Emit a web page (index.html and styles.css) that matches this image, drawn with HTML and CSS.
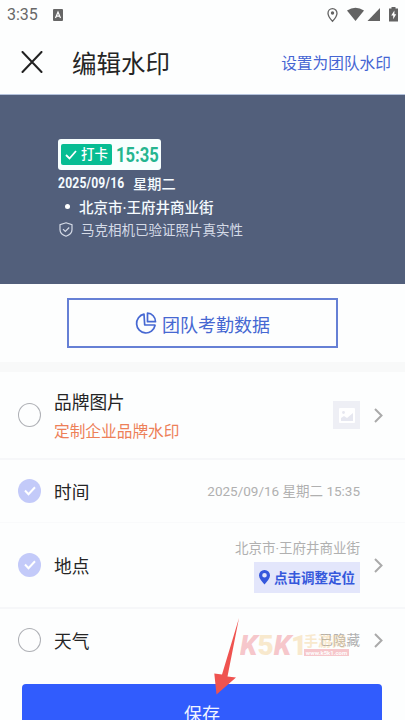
FILE: index.html
```html
<!DOCTYPE html>
<html lang="zh-CN">
<head>
<meta charset="utf-8">
<title>编辑水印</title>
<link rel="stylesheet" href="styles.css">
</head>
<body>
<div class="screen">
  <div class="status">
    <span class="clock">3:35</span>
    <svg class="ime" width="10" height="12" viewBox="0 0 10 12"><rect width="10" height="12" rx="1" fill="#666"/><path d="M2.5 9 5 3l2.5 6M3.4 7.2h3.2" fill="none" stroke="#fff" stroke-width="1.2"/></svg>
    <svg class="sys" width="72" height="16" viewBox="0 0 72 16" fill="#636363">
      <path d="M5.500 1.600c-2.600 0-4.500 2-4.500 4.600 0 3.300 4.500 8 4.500 8s4.500-4.700 4.500-8c0-2.600-1.900-4.600-4.500-4.600z" fill="none" stroke="#636363" stroke-width="1.300"/><circle cx="5.500" cy="6" r="1.700"/>
      <path d="M20 3.500Q28.500-1.900 37 3.500L28.500 14z"/>
      <path d="M53 1v13H40.500z"/>
      <path d="M64.500 0h4v1.500H71V14.500H62V1.500h2.500z"/><path d="M67.400 3.500 64.200 8.500h2v3.800l3-5h-1.800z" fill="#fff"/>
    </svg>
  </div>
  <header class="bar">
    <svg class="close" width="22" height="22" viewBox="0 0 22 22"><path d="M1.500 1 20.500 21M20.500 1 1.500 21" stroke="#222" stroke-width="2" stroke-linecap="round"/></svg>
    <h1>编辑水印</h1>
    <a class="team">设置为团队水印</a>
  </header>

  <section class="preview">
    <div class="punch">
      <span class="tag"><svg width="12" height="10" viewBox="0 0 12 10"><path d="M1 5l3.500 3.500L11 1" fill="none" stroke="#fff" stroke-width="1.800"/></svg>打卡</span>
      <span class="time">15:35</span>
    </div>
    <div class="date"><span class="num">2025/09/16</span><span>星期二</span></div>
    <div class="place"><i></i>北京市·王府井商业街</div>
    <div class="verified"><svg width="14" height="15" viewBox="0 0 14 15" fill="none" stroke="#d5dbe7" stroke-width="1.200"><path d="M7 .8 13 2.700v5c0 3.300-2.700 5.300-6 6.500-3.300-1.200-6-3.200-6-6.500v-5z"/><path d="M4 7.200l2.300 2.300L10.200 5.500"/></svg>马克相机已验证照片真实性</div>
  </section>

  <section class="stats">
    <div class="stats-btn"><svg width="22" height="23" viewBox="0 0 22 23" fill="none" stroke="#4668d2" stroke-width="1.700" stroke-linejoin="round"><path d="M9 2.200A9.300 9.500 0 1 0 20 13.500L19.900 13H9.700z"/><path d="M12.500 1.200v8.500h8A8.200 8.500 0 0 0 12.500 1.200z"/></svg><span>团队考勤数据</span></div>
  </section>

  <main class="list">
    <div class="row brand">
      <span class="radio"></span>
      <div class="label">品牌图片<small>定制企业品牌水印</small></div>
      <div class="thumb"><svg width="16" height="15" viewBox="0 0 16 15"><rect width="16" height="15" rx="1" fill="#fff"/><path d="M2 13V10l3-2 3 2 6-5v8z" fill="#e6e7f0"/><circle cx="4.500" cy="4.500" r="1.400" fill="#e6e7f0"/></svg></div>
      <svg class="chev" width="9" height="15" viewBox="0 0 9 15"><path d="M1 1l6.500 6.500L1 14"/></svg>
    </div>
    <div class="row when">
      <span class="radio on"><svg width="12" height="10" viewBox="0 0 12 10"><path d="M1 4.500l3.500 3.700L11 1.200" fill="none" stroke="#fff" stroke-width="2"/></svg></span>
      <div class="label">时间</div>
      <div class="value">2025/09/16 星期二 15:35</div>
    </div>
    <div class="row where">
      <span class="radio on"><svg width="12" height="10" viewBox="0 0 12 10"><path d="M1 4.500l3.500 3.700L11 1.200" fill="none" stroke="#fff" stroke-width="2"/></svg></span>
      <div class="label">地点</div>
      <div class="value">北京市·王府井商业街
        <div class="adjust"><svg width="11" height="15" viewBox="0 0 11 15"><path fill-rule="evenodd" d="M5.500 0A5.400 5.400 0 0 0 0 5.500C0 8.500 3 11.500 5.500 14.500 8 11.500 11 8.500 11 5.500A5.400 5.400 0 0 0 5.500 0zm0 3a2.300 2.300 0 1 1 0 4.600 2.300 2.300 0 0 1 0-4.600z" fill="#3558dc"/></svg><span>点击调整定位</span></div>
      </div>
      <svg class="chev" width="9" height="15" viewBox="0 0 9 15"><path d="M1 1l6.500 6.500L1 14"/></svg>
    </div>
    <div class="row weather">
      <span class="radio"></span>
      <div class="label">天气</div>
      <div class="value">已隐藏</div>
      <svg class="chev" width="9" height="15" viewBox="0 0 9 15"><path d="M1 1l6.500 6.500L1 14"/></svg>
    </div>
  </main>
  <div class="save">保存</div>

  <div class="brandmark">
    <div class="mark"><b>K</b><b class="gold">5</b><b>K</b><b class="gold">1</b></div>
    <div class="side"><span>手游网</span><em>www.k5k1.com</em></div>
  </div>
  <svg class="arrow" width="28" height="78" viewBox="0 0 28 78"><path d="M26 0 14.500 58.500 23 59.500 3.500 76.500 1.300 55.500 9 56.500z" fill="#ef5350"/></svg>
</div>
</body>
</html>
```
FILE: styles.css
```css
* { box-sizing: border-box; }
body {
  margin: 0;
  background: #fdfefe;
  font-family: Roboto, "Noto Sans CJK SC", sans-serif;
  color: #252525;
}
.screen { position: relative; width: 405px; height: 720px; overflow: hidden; }
svg { display: block; flex: none; }

.status { height: 30px; display: flex; align-items: center; padding: 0 6px 0 7px; }
.clock { font-size: 16px; color: #686868; width: 46px; line-height: 20px; }
.sys { margin-left: auto; }

.bar { height: 65px; display: flex; align-items: center; padding: 0 14px 0 21px; border-bottom: 1px solid #b4c2dc; }
.bar h1 { margin: 6px 0 0 29px; font-size: 24.500px; font-weight: 400; line-height: 34px; white-space: nowrap; }
.team { margin-left: auto; font-size: 15.700px; color: #4565d3; white-space: nowrap; }

.preview { height: 189px; background: #525f7b; padding: 44px 0 0 58px; color: #f5fbff; white-space: nowrap; }
.punch { width: 103px; height: 31px; background: #f8fffe; border-radius: 3px; padding: 0 3px; display: flex; align-items: center; }
.tag { width: 52px; height: 21px; border-radius: 2px; background: #06bd93; color: #fff; display: flex; align-items: center; gap: 4px; padding-left: 4px; font-size: 13.500px; font-weight: 500; line-height: 21px; }
.time { margin-left: 4px; width: 42px; color: #25b58f; font-size: 20px; line-height: 24px; font-weight: 700; transform: scaleX(.83); transform-origin: left; }
.date { display: flex; align-items: center; height: 22px; margin-top: 2px; font-size: 14.200px; font-weight: 500; }
.num { width: 75px; font-size: 15px; letter-spacing: .2px; font-weight: 700; transform: scaleX(.81); transform-origin: left; }
.place { display: flex; align-items: center; height: 24px; font-size: 14.500px; font-weight: 500; }
.place i { width: 5px; height: 5px; border-radius: 50%; background: #fff; margin: 0 9px 0 7px; }
.verified { display: flex; align-items: center; height: 22px; font-size: 13.500px; color: #d5dbe7; gap: 8px; padding-left: 1px; }

.stats { height: 78px; padding: 14px 67px 0; }
.stats-btn { width: 271px; height: 50px; border: 2px solid #6680d5; display: flex; align-items: center; justify-content: center; gap: 5px; color: #4668d2; font-size: 18px; line-height: 26px; }
.stats-btn span { margin-top: 5px; }

.list { border-top: 10px solid #f8f9f9; }
.row { display: flex; align-items: center; padding: 0 22px 0 18px; border-bottom: 2px solid #f6f7f9; }
.brand { height: 88px; }
.when { height: 63px; border-bottom: 1px solid #f9fafb; }
.where { height: 86px; }
.weather { height: 62px; border: 0; }
.radio { width: 23px; height: 24px; border: 1px solid #aeb0b5; border-radius: 50%; flex: none; display: flex; align-items: center; justify-content: center; }
.radio.on { border: 0; background: #c3caf9; }
.label { margin: 3px 0 0 13px; font-size: 17.700px; line-height: 28px; white-space: nowrap; }
.brand .label { margin-top: 6px; }
.label small { display: block; font-size: 15.700px; line-height: 30px; color: #ed8058; }
.thumb { width: 27px; height: 28px; margin-left: auto; background: #eeeff5; display: flex; align-items: center; justify-content: center; }
.chev { margin-left: 14px; fill: none; stroke: #aaa; stroke-width: 2; }
.value { margin-left: auto; font-size: 13.500px; line-height: 20px; color: #b0b0b0; text-align: right; white-space: nowrap; }
.when .value { margin-right: 23px; }
.adjust { width: 106px; height: 31px; margin: 4px 0 0 auto; display: flex; align-items: center; justify-content: center; gap: 4px; background: #e3e6fb; color: #3558dc; font-size: 13.500px; font-weight: 700; }
.adjust span { margin-top: 2px; }
.save { width: 360px; height: 60px; margin: 13px 0 0 22px; border-radius: 4px; background: #315cfd; color: #f2f5ff; font-size: 18px; line-height: 61px; text-align: center; }

.brandmark { position: absolute; left: 240px; top: 634px; display: flex; opacity: .4; }
.mark { width: 64px; display: flex; font-size: 28px; line-height: 23px; font-style: italic; color: #ed7680; }
.mark b { font-weight: 900; }
.mark .gold { color: #f3ca86; font-style: normal; }
.side { width: 45px; color: #f3ca86; font-size: 14px; line-height: 15px; font-weight: 700; white-space: nowrap; }
.side span, .side em { display: block; }
.side em { height: 7px; background: #ed7680; color: #fff; font-size: 6px; line-height: 7px; text-align: center; font-style: normal; }
.arrow { position: absolute; left: 213px; top: 618px; }
```
